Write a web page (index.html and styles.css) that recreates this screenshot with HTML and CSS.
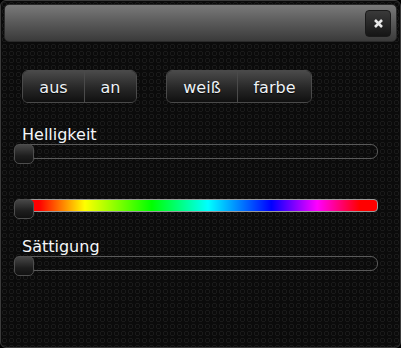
FILE: index.html
```html
<!DOCTYPE html>
<html lang="de">
<head>
    <meta charset="UTF-8">
    <meta name="viewport" content="width=device-width, initial-scale=1.0">
    <title>Licht</title>
    <link rel="stylesheet" href="styles.css">
</head>
<body>

<div class="dialog">
    <div class="dialog-header">
        <button class="close-btn" title="Schließen">
            <svg width="9" height="9" viewBox="0 0 9 9">
                <path d="M1 1 L8 8 M8 1 L1 8" stroke="#e8e8e8" stroke-width="2.6" fill="none"/>
            </svg>
        </button>
    </div>

    <div class="dialog-content">
        <div class="button-row">
            <div class="btn-group">
                <button class="btn btn-aus">aus</button>
                <button class="btn btn-an">an</button>
            </div>
            <div class="btn-group">
                <button class="btn btn-weiss">weiß</button>
                <button class="btn btn-farbe">farbe</button>
            </div>
        </div>

        <label class="slider-label label-hell">Helligkeit</label>
        <div class="slider slider-hell">
            <div class="track"></div>
            <div class="handle"></div>
        </div>

        <div class="slider slider-hue">
            <div class="track hue-track"></div>
            <div class="handle"></div>
        </div>

        <label class="slider-label label-sat">Sättigung</label>
        <div class="slider slider-sat">
            <div class="track"></div>
            <div class="handle"></div>
        </div>
    </div>
</div>

</body>
</html>
```

FILE: styles.css
```css
body {
    font-family: "DejaVu Sans", Verdana, sans-serif;
    background-color: #000;
    margin: 0;
}
.dialog {
    box-sizing: border-box;
    height: 348px;
    border: 1px solid #3c3c3c;
    border-radius: 6px;
    padding: 3px;
    background-color: #0b0b0b;
    background-image: radial-gradient(circle, transparent 1.4px, #1a1a1a 1.9px, #1a1a1a 2.4px, transparent 2.9px);
    background-size: 7px 7px;
}
.dialog-header {
    box-sizing: border-box;
    height: 38px;
    border: 1px solid #2a2a2a;
    border-radius: 5px;
    background: linear-gradient(#7a7a7a, #5c5c5c 45%, #3a3a3a);
    display: flex;
    justify-content: flex-end;
    align-items: center;
    padding-right: 5px;
}
.close-btn {
    width: 26px;
    height: 27px;
    margin-top: 1px;
    padding: 0;
    border: 1px solid #1a1a1a;
    border-radius: 4px;
    background: linear-gradient(#3a3a3a, #151515);
    display: flex;
    align-items: center;
    justify-content: center;
}
.dialog-content {
    padding: 0 18px;
}
.button-row {
    display: flex;
    gap: 29px;
    margin-top: 28px;
}
.btn-group {
    display: flex;
    border: 1px solid #4a4a4a;
    border-radius: 6px;
    overflow: hidden;
}
.btn {
    box-sizing: border-box;
    height: 31px;
    padding: 2px 0 0;
    border: none;
    background: linear-gradient(#4a4a4a, #272727 55%, #101010);
    color: #eef2f6;
    font-family: inherit;
    font-size: 16px;
    text-shadow: 0 1px 1px #000;
}
.btn + .btn {
    border-left: 1px solid #4a4a4a;
}
.btn-aus { width: 61px; }
.btn-an { width: 52px; }
.btn-weiss { width: 70px; }
.btn-farbe { width: 74px; }
.slider-label {
    display: block;
    color: #f4f6f8;
    font-size: 16px;
    line-height: 13px;
    height: 13px;
}
.label-hell { margin-top: 25px; }
.label-sat { margin-top: 21px; }
.slider {
    position: relative;
    height: 20px;
    width: 354px;
    margin-left: 2px;
}
.slider-hell { margin-top: -1px; }
.slider-hue { margin-top: 35px; }
.slider-sat { margin-top: 1px; }
.track {
    box-sizing: border-box;
    height: 15px;
    margin-top: 4px;
    border: 1px solid #5a5a5a;
    border-radius: 7px;
}
.slider-sat .track {
    margin-top: 3px;
}
.hue-track {
    height: 13px;
    border: 1px solid #9a9a9a;
    border-radius: 4px;
    background: linear-gradient(to right, #f00 4%, #ff0 17%, #0f0 36%, #0ff 52%, #00f 70%, #f0f 83%, #f00 95%);
}
.handle {
    position: absolute;
    left: -10px;
    top: 0;
    box-sizing: border-box;
    width: 20px;
    height: 20px;
    border: 1px solid #4e4e4e;
    border-radius: 5px;
    background: linear-gradient(#474747, #1e1e1e 60%, #111);
}
```
